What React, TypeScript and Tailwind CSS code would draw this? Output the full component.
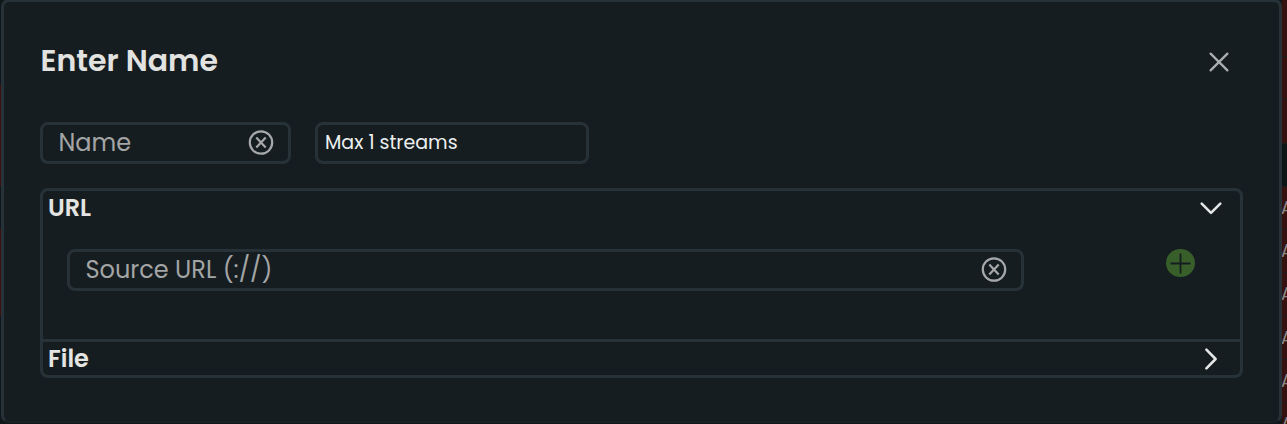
import type { ReactNode } from "react";

function ClearIcon() {
  return (
    <svg width="26" height="26" viewBox="0 0 26 26" fill="none" stroke="#a6a8a9" className="shrink-0">
      <circle cx="13" cy="12.5" r="11.2" strokeWidth="2.2" />
      <path d="M8.3 7.6l9.4 9.8M17.7 7.6l-9.4 9.8" strokeWidth="2.2" />
    </svg>
  );
}

function Field({ label, className }: { label: string; className: string }) {
  return (
    <div className={`flex h-[42px] items-center justify-between rounded-lg border-3 border-[#263238] pr-[14px] pl-[15.5px] ${className}`}>
      <span className="text-[24px] leading-[36px] whitespace-pre text-[#a3a5a6]">{label}</span>
      <ClearIcon />
    </div>
  );
}

function SectionHeader({ title, children }: { title: string; children: ReactNode }) {
  return (
    <div className="flex h-[34px] items-center justify-between pr-[17px] pl-[5px]">
      <h2 className="text-[24px] leading-[34px] font-semibold text-[#e4e5e3]">{title}</h2>
      <svg width="24" height="24" viewBox="0 0 24 24" fill="none" stroke="#e4e5e5" strokeWidth="2.6" strokeLinecap="round" strokeLinejoin="round">
        {children}
      </svg>
    </div>
  );
}

const heights = [
  "h-[57px] bg-[#35120f]",
  "h-[43px] bg-[#35120f]",
  "h-[44px] bg-[#35120f]",
  "h-[43px] bg-[#0e1517]",
];
const rows = ["a", "b", "c", "d", "e", "f"];

export default function App() {
  return (
    <div className="flex h-[424px] w-[1287px] overflow-hidden bg-[#11181a] font-['Poppins','Inter',sans-serif]">
      <div className="flex w-px shrink-0 flex-col bg-[#10171b]">
        <div className="mt-[85px] h-[101px] bg-[#3b100e]" />
        <div className="mt-[43px] h-[87px] bg-[#3b100e]" />
      </div>
      <div className="-mt-px h-[424px] w-[1281px] shrink-0 rounded-lg border-3 border-b-2 border-[#263238] border-b-[#192124] bg-[#161d20] pr-[36px] pl-[36px]">
        <header className="mt-[34px] flex h-[50px] items-center justify-between pr-[13px]">
          <h1 className="pl-[0.5px] text-[30px] leading-[50px] font-semibold text-[#e2e3e1]">Enter Name</h1>
          <svg width="22" height="22" viewBox="0 0 22 22" fill="none" stroke="#aaaeaf" strokeWidth="2.3" strokeLinecap="round" className="mt-0.5">
            <path d="M2.6 2.6l16.8 16.8M19.4 2.6L2.6 19.4" />
          </svg>
        </header>
        <div className="mt-[36px] flex gap-6">
          <Field label="Name" className="w-[251px]" />
          <div className="flex h-[42px] w-[274px] items-center rounded-lg border-3 border-[#263238] pl-[7px]">
            <span className="text-[19px] leading-[36px] text-[#edf0f0]">Max 1 streams</span>
          </div>
        </div>
        <div className="mt-6 h-[190px] w-[1203px] rounded-lg border-3 border-[#263238]">
          <section className="h-[148px]">
            <SectionHeader title="URL">
              <path d="M2.7 7.6L12 16.8l9.3-9.2" />
            </SectionHeader>
            <div className="mt-[24px] flex justify-between pr-[45px] pl-[24px]">
              <Field label="Source URL (://)" className="w-[957px]" />
              <svg width="29" height="29" viewBox="0 0 29 29">
                <ellipse cx="14.5" cy="14" rx="14.5" ry="14" fill="#385f2a" />
                <path d="M14.5 5.2v18.6M5.2 14.5h18.6" fill="none" stroke="#161d20" strokeWidth="1.8" strokeLinecap="round" />
              </svg>
            </div>
          </section>
          <section className="border-t-3 border-[#263238]">
            <SectionHeader title="File">
              <path d="M7.4 2.7L16.6 12l-9.2 9.3" />
            </SectionHeader>
          </section>
        </div>
      </div>
      <div className="flex w-[5px] shrink-0 flex-col overflow-hidden">
        {heights.map((h, i) => (
          <div key={i} className={`shrink-0 border-b border-[#171b1c] ${h}`} />
        ))}
        {rows.map((r) => (
          <div key={r} className="h-[43.2px] shrink-0 border-b border-[#201b1c] bg-[#35120f] text-[18px] leading-[41px] text-[#8a8687]">
            <span className="-ml-px">A</span>
          </div>
        ))}
      </div>
    </div>
  );
}
